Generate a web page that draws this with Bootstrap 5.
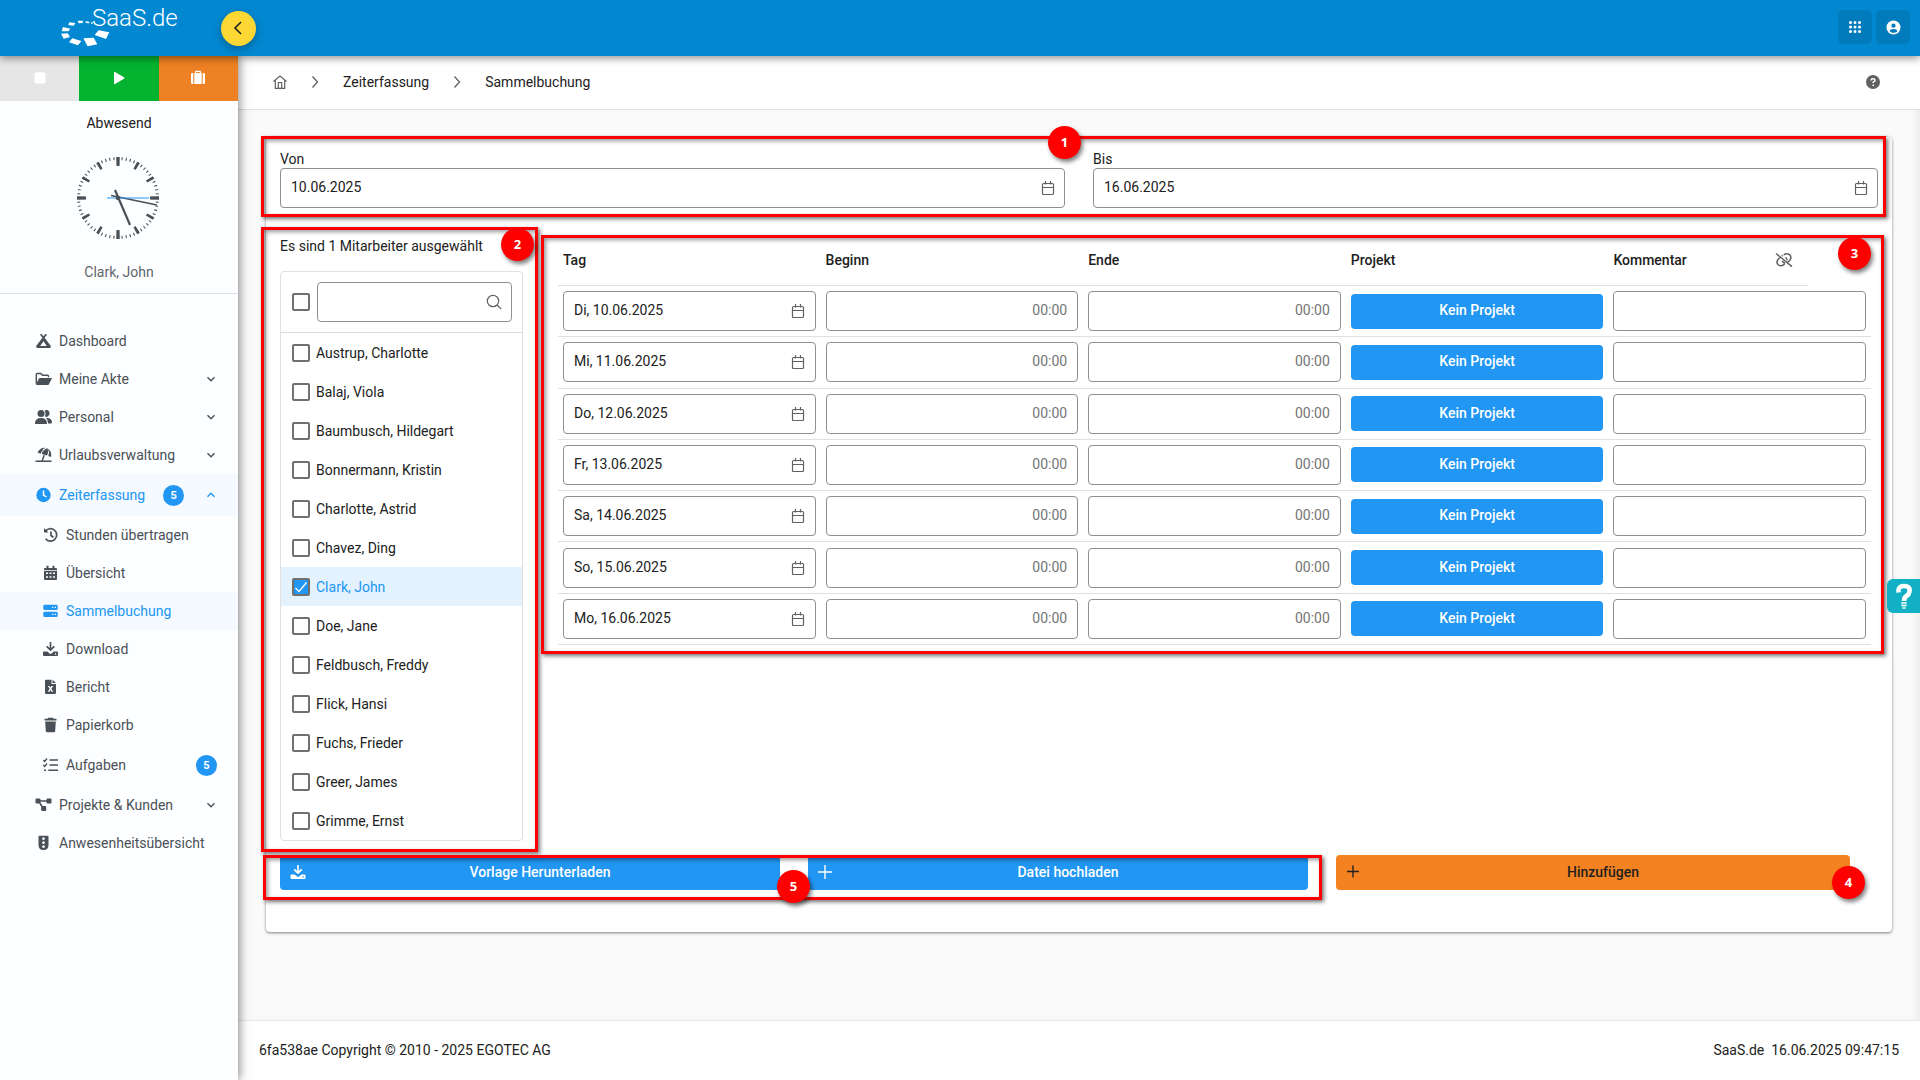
<!DOCTYPE html>
<html lang="de">
<head>
<meta charset="utf-8">
<meta name="viewport" content="width=device-width, initial-scale=1">
<title>Sammelbuchung – SaaS.de</title>
<link href="https://cdn.jsdelivr.net/npm/bootstrap@5.3.0/dist/css/bootstrap.min.css" rel="stylesheet">
<style>
:root { --brand: #0288d1; --accent: #2196f3; --ink: #212121; --side: #495057; --line: #e0e0e0; --note: #f00; }
body { font-family: Roboto, "Noto Sans", sans-serif; font-size: 14px; line-height: 18px; color: var(--ink); background: #fafafa; }
svg { display: block; flex: none; }
.ico { width: 16px; height: 16px; fill: currentColor; }
.line-ico { fill: none; stroke: currentColor; }
a { color: inherit; text-decoration: none; }

/* top bar */
.topbar { height: 56px; background: var(--brand); box-shadow: 0 2px 8px rgba(0,0,0,.45); z-index: 20; position: relative; color: #fff; padding-right: 10px; }
.brandbox { width: 221px; padding: 8px 0 0 61px; height: 56px; }
.brandbox svg { margin-top: 12px; }
.brandname { font-size: 24px; line-height: 21px; font-weight: 300; margin-left: -19px; }
.toggle { width: 35px; height: 35px; margin-top: 11px; padding: 0 2px 2px 0; border: 0; border-radius: 50%; background: #fdd835; color: #212121; box-shadow: 0 3px 8px rgba(0,0,0,.3); }
.topbtns { margin-top: 10px; gap: 4px; }
.topbtn { width: 34px; height: 34px; border: 0; border-radius: 5px; background: #027bbd; color: #fff; }

/* side bar */
.sidebar { width: 238px; background: #fdfeff; color: var(--side); box-shadow: 1px 0 10px rgba(0,0,0,.5); z-index: 10; position: relative; }
.state button { flex: 1; height: 45px; border: 0; color: #fff; padding-bottom: 2px; }
.st-stop { background: #e6e6e6; }
.st-play { background: #03b22f; }
.st-trip { background: #ed8123; }
.person { padding: 11px 0 10px; line-height: 22px; border-bottom: 1px solid #dee2e6; color: #5f666c; }
.person svg { margin: 23px auto 22px; }
.presence { color: var(--ink); }
.menu { padding-top: 28px; }
.menu a { height: 38px; padding: 0 21px 0 35px; display: flex; align-items: center; gap: 7px; }
.menu .sub { padding-left: 42px; }
.menu .tall { height: 42px; }
.menu .on { background: #f4faff; color: var(--accent); }
.menu .ico { width: 17px; }
.menu .chev { width: 12px; height: 12px; margin-left: auto; }
.count { width: 21px; height: 21px; line-height: 21px; margin-left: 11px; border-radius: 50%; background: var(--accent); color: #fff; font-size: 11px; font-weight: 700; text-align: center; }

/* page */
.crumbs { height: 54px; background: #fff; border-bottom: 1px solid var(--line); padding: 0 40px 2px 34px; gap: 24px; }
.crumbs svg { color: #616161; }
.crumbs .arrow { margin-left: -1px; }
.pagebody { padding: 27px 28px; box-shadow: inset -6px 0 8px -4px rgba(0,0,0,.08); }
.sheet { background: #fff; border-radius: 4px; box-shadow: 0 1px 3px rgba(0,0,0,.5); padding: 13px 0 42px; }
.sheet .fld { height: 40px; border: 1px solid #8f8f8f; border-radius: 4px; font-size: 14px; padding: 0 10px 2px; color: var(--ink); background: #fff; width: 100%; }
.sheet .fld::placeholder { color: #757575; }
.boxed { position: relative; }
.boxed .ico { position: absolute; right: 9px; top: 12px; color: #616161; }
.booking .boxed .ico, .find .boxed .ico { right: 10px; }
.range { padding: 0 14px; gap: 28px; }
.split { margin-top: 29px; }
.staffcol { width: 16.6667%; padding: 0 14px; }
.staffcol p { margin: 0 0 16px; white-space: nowrap; }
.staff { border: 1px solid #e0e0e0; border-radius: 4px; }
.staff .find { padding: 10px 10px 10px 11px; gap: 7px; border-bottom: 1px solid #dcdcdc; }
.staff label { display: flex; align-items: center; gap: 6px; height: 39px; padding-left: 11px; }
.staff .sel { background: #e3f2fd; color: var(--accent); }
.tick { appearance: none; flex: none; margin: 0; width: 18px; height: 18px; border: 2px solid #707070; border-radius: 2px; background: #fff; }
.tick:checked { background: var(--accent) url("data:image/svg+xml,%3Csvg xmlns='http://www.w3.org/2000/svg' viewBox='0 0 14 14'%3E%3Cpath fill='none' stroke='%23fff' stroke-width='1.3' d='M1.5 8l3.5 3.5L12.5 2.5'/%3E%3C/svg%3E"); }
.bookcol { flex: 1; min-width: 0; padding: 0 21px; margin-top: -2px; }
.booking { width: 100%; height: 410px; table-layout: fixed; border-collapse: separate; border-spacing: 0; }
.booking th { height: 51px; font-weight: 500; padding: 0 5px; border-bottom: 1px solid var(--line); }
.booking th:last-child { border: 0; }
.booking .c-note { padding-right: 15px; }
.booking td { padding: 5px; border-bottom: 1px solid var(--line); }
.c-fifth { width: 20%; }
.c-rest { width: 63px; }
.act { border: 0; border-radius: 4px; height: 35px; background: var(--accent); color: #fff; font-weight: 500; padding: 0 10px 2px; width: 100%; }
.act span { flex: 1; margin-left: 4px; }
.act.warn { background: #f58220; color: var(--ink); }
.acts { display: grid; grid-template-columns: 500fr 500fr 514fr; gap: 28px; padding: 0 42px 0 14px; margin-top: 14px; }
.files { grid-column: 1 / span 2; display: grid; grid-template-columns: 1fr 1fr; column-gap: 28px; }
.foot { height: 60px; background: #fff; border-top: 1px solid #e8e8e8; padding: 0 21px 2px; }
.foot span { white-space: pre; }

/* red annotations lying over the page */
.frame { position: absolute; border: 3px solid var(--note); box-shadow: 2px 2px 4px rgba(0,0,0,.55), inset 2px 2px 4px rgba(0,0,0,.4); pointer-events: none; z-index: 5; }
.pin { position: absolute; width: 33px; height: 33px; border-radius: 50%; background: var(--note); color: #fff; font: 700 13px/33px "Open Sans", sans-serif; text-align: center; box-shadow: 2px 3px 4px rgba(0,0,0,.5); z-index: 6; }
.f-range { inset: -14px 6px -9px -5px; } .p-range { left: 50%; top: -24px; margin-left: -31px; }
.f-staff { inset: -10px -1px -11px -5px; } .p-staff { right: 3px; top: -9px; }
.f-book { inset: 0 -13px -9px -17px; } .p-book { right: 0; top: 2px; }
.f-acts { inset: 0 -14px -10px -17px; } .p-acts { left: 50%; top: 15px; margin-left: -17px; } .p-add { right: -15px; top: 11px; }
.helper { position: fixed; right: 0; top: 579px; width: 33px; height: 34px; border: 0; border-radius: 6px 0 0 6px; background: #12b0c4; color: #fff; z-index: 9; padding: 0 0 0 6px; }
</style>
<script src="https://cdn.jsdelivr.net/npm/bootstrap@5.3.0/dist/js/bootstrap.bundle.min.js"></script>
</head>
<body class="d-flex flex-column min-vh-100">

<svg class="d-none" aria-hidden="true">
  <symbol id="cal" viewBox="0 0 16 16"><path d="M3.500 3.500h9q1 0 1 1v9q0 1-1 1h-9q-1 0-1-1v-9q0-1 1-1zM2.500 7.500h11M5.500 1v3.500M10.500 1v3.500" fill="none" stroke="currentColor" stroke-width="1.200"/></symbol>
  <symbol id="down" viewBox="0 0 12 12"><path d="M2.500 4.200L6 7.700l3.500-3.500" fill="none" stroke="currentColor" stroke-width="1.400"/></symbol>
  <symbol id="gt" viewBox="0 0 8 16"><path d="M1.500 2.500L6.500 8l-5 5.500" fill="none" stroke="currentColor" stroke-width="1.300"/></symbol>
  <symbol id="load" viewBox="0 0 16 16"><path d="M7.200 1h1.600v6l2.400-2.300 1.200 1.200L8 10.300 3.600 5.900l1.200-1.200L7.200 7z"/><path d="M1.500 10.500h3.200L8 13.300l3.300-2.800h3.200a1 1 0 0 1 1 1V14a1 1 0 0 1-1 1h-13a1 1 0 0 1-1-1v-2.500a1 1 0 0 1 1-1zM13 12.200a.7.7 0 1 0 .01 0z" fill-rule="evenodd"/></symbol>
</svg>

<header class="topbar d-flex align-items-start">
  <a href="#" class="brandbox d-flex align-items-start" aria-label="SaaS.de">
    <svg width="50" height="27" viewBox="0 0 150 81" fill="#fff"><path d="M101 45l12-14 32 6-10 20zM67 55l31-2 11 20-29 6zM34 55l27 8-10 13-27-9zM0 41l20-1 7 11-19 5zM6 21l22 5-6 8H2zM25 7l18 2-5 8-16-2zM50 2h16l-1 7-12 1zM73 4l11 1 2 5-11-1zM90 7h5v4h-5zM99 10h4v3h-4z"/></svg>
    <div class="brandname">SaaS.de</div>
  </a>
  <button class="toggle d-flex align-items-center justify-content-center" aria-label="Menü einklappen"><svg width="12" height="16" viewBox="0 0 12 16" class="line-ico" stroke-width="1.600"><path d="M9 2L3 8l6 6"/></svg></button>
  <div class="topbtns d-flex ms-auto">
    <button class="topbtn d-flex align-items-center justify-content-center p-0" aria-label="Apps"><svg width="14" height="14" viewBox="0 0 14 14"><path d="M2.500 2.500h.01M7 2.500h.01M11.500 2.500h.01M2.500 7h.01M7 7h.01M11.500 7h.01M2.500 11.500h.01M7 11.500h.01M11.500 11.500h.01" stroke="#fff" stroke-width="3" stroke-linecap="round"/></svg></button>
    <button class="topbtn d-flex align-items-center justify-content-center p-0" aria-label="Profil"><svg width="15" height="15" viewBox="0 0 15 15"><circle cx="7.500" cy="7.500" r="7" fill="#fff"/><circle cx="7.500" cy="5.700" r="2.100" fill="#027bbd"/><path d="M3.700 11.300c0-3.200 7.600-3.200 7.600 0-2 2-5.600 2-7.600 0z" fill="#027bbd"/></svg></button>
  </div>
</header>

<div class="d-flex flex-grow-1">
  <aside class="sidebar flex-shrink-0">
    <div class="state d-flex">
      <button class="st-stop d-flex align-items-center justify-content-center" aria-label="Stopp"><svg width="12" height="12"><rect x=".5" y=".5" width="11" height="11" rx="1.500" fill="#fff"/></svg></button>
      <button class="st-play d-flex align-items-center justify-content-center" aria-label="Start"><svg width="12" height="14" viewBox="0 0 12 14"><path d="M1 1.500v11q0 1 1 .5l9-5.300q1-.7 0-1.400L2 1q-1-.5-1 .5z" fill="#fff"/></svg></button>
      <button class="st-trip d-flex align-items-center justify-content-center" aria-label="Reise"><svg width="16" height="16" viewBox="0 0 16 16" fill="#fff"><path d="M5 3V1.500q0-.8.800-.8h4.400q.8 0 .8.800V3h.7v11H4.300V3zM6.200 3h3.600V1.900H6.200z" fill-rule="evenodd"/><path d="M3.300 3v11h-1Q1 14 1 12.700V4.300Q1 3 2.300 3zM12.700 3v11h1q1.300 0 1.300-1.300V4.300Q15 3 13.700 3z"/></svg></button>
    </div>
    <div class="person text-center">
      <div class="presence">Abwesend</div>
      <svg width="86" height="82" viewBox="-42 -41 86 82" role="img" aria-label="Uhr">
        <circle r="39.500" fill="none" stroke="#495057" stroke-width="3" pathLength="600" stroke-dasharray="2.600 7.400" stroke-dashoffset="1.300"/>
        <circle r="37" fill="none" stroke="#495057" stroke-width="8" pathLength="120" stroke-dasharray="1.400 8.600" stroke-dashoffset=".7"/>
        <path d="M-41 0h9M32 0h9M0-41v9M0 32v9" stroke="#495057" stroke-width="3"/>
        <path d="M-7-2.500L39 7" stroke="#495057" stroke-width="1.600"/>
        <path d="M-3-8L12 27" stroke="#495057" stroke-width="2.200"/>
        <path d="M-11 0h42" stroke="#2196f3" stroke-width="1.200"/>
        <circle r="2.200" fill="#495057"/>
      </svg>
      <div>Clark, John</div>
    </div>
    <nav class="menu">
      <a href="#"><svg class="ico" viewBox="0 0 17 16"><path d="M6.200.8L8.500 3.300 10.800.8l1.200 1L9.600 4.700l6.200 8.300q.5 1.800-1.300 2h-12Q.7 14.800 1.200 13l6.200-8.300L5 1.800zM8.500 8.300L5.200 13h6.600z" fill-rule="evenodd"/></svg>Dashboard</a>
      <a href="#"><svg class="ico" viewBox="0 0 17 16"><path d="M1.300 12.800V3.500q0-1 1-1h3.500l1.700 1.800h5q1 0 1 1v1" fill="none" stroke="currentColor" stroke-width="1.400"/><path d="M4.500 7h11.700q.8.200.5 1l-3 5.500q-.4.500-1 .5H1.500q-.7-.2-.4-.9L4 7.500z"/></svg>Meine Akte<svg class="chev"><use href="#down"/></svg></a>
      <a href="#"><svg class="ico" viewBox="0 0 17 16"><circle cx="6" cy="4.500" r="3.500"/><path d="M0 14.500q0-5.500 6-5.500t6 5.500q-.2.500-1 .5H1q-1 0-1-.5zM9.500 1.400a3.400 3.400 0 1 1 .3 6q1.500-3-.3-6zM11 9q6-.5 6 4.500 0 1-1 1h-3Q13.200 11 11 9z"/></svg>Personal<svg class="chev"><use href="#down"/></svg></a>
      <a href="#"><svg class="ico" viewBox="0 0 17 16"><path d="M2.500 5.500Q5.500-.3 11 .9L8.300 1.800 5.600 6.700zM9 3l3-1.700Q17.300 4 16 10l-2.800-1q1.800-4.300-.6-6.700 1.200 3-.7 6.300L6.800 6.900q.5-2.700 2.200-3.900zM8.400 8l1.500.5L8 13.500h8.500V15H.5v-1.500h6z"/></svg>Urlaubsverwaltung<svg class="chev"><use href="#down"/></svg></a>
      <a href="#" class="on tall"><svg class="ico" viewBox="0 0 16 16"><circle cx="8" cy="8" r="7.200"/><path d="M8 3.500V8l3 2" fill="none" stroke="#fff" stroke-width="1.500"/></svg>Zeiterfassung<span class="count">5</span><svg class="chev" viewBox="0 0 12 12"><path d="M2.500 7.700L6 4.200l3.500 3.500" fill="none" stroke="currentColor" stroke-width="1.400"/></svg></a>
      <a href="#" class="sub"><svg class="ico line-ico" viewBox="0 0 16 16" stroke-width="1.700"><path d="M2.800 4.500a6.200 6.200 0 1 1 .3 7.200M8.500 4.500v4l2.500 1.800"/><path d="M1.500 1v4.500H6z" fill="currentColor" stroke="none"/></svg>Stunden übertragen</a>
      <a href="#" class="sub"><svg class="ico" viewBox="0 0 16 16"><path d="M4 .8h2V3h4V.8h2V3h1.500q1 0 1 1v1.200h-13V4q0-1 1-1H4zM1.500 6h13v8q0 1-1 1h-11q-1 0-1-1zm2 1.500V9h2V7.500zm3.500 0V9h2V7.500zm3.500 0V9h2V7.500zm-7 3.800v1.500h2v-1.500zm3.500 0v1.500h2v-1.500zm3.500 0v1.500h2v-1.500z" fill-rule="evenodd"/></svg>Übersicht</a>
      <a href="#" class="sub on"><svg class="ico" viewBox="0 0 16 16"><path d="M2.200 1.700h11.600q1.400 0 1.400 1.400v2.600q0 1.400-1.400 1.400H2.200Q.8 7.100.8 5.700V3.100q0-1.400 1.400-1.400zM9.500 3.700v1.400h1.300V3.700zm2.700 0v1.400h1.300V3.700zM2.200 8.700h11.600q1.400 0 1.400 1.400v2.600q0 1.400-1.400 1.400H2.200Q.8 14.100.8 12.700v-2.600q0-1.400 1.400-1.400zM9.500 10.700v1.400h1.300v-1.400zm2.700 0v1.400h1.300v-1.400z" fill-rule="evenodd"/></svg>Sammelbuchung</a>
      <a href="#" class="sub"><svg class="ico"><use href="#load"/></svg>Download</a>
      <a href="#" class="sub"><svg class="ico" viewBox="0 0 16 16"><path d="M3.500.8H9V5h4.500v8.700q0 1.300-1.300 1.300H3.800q-1.300 0-1.300-1.300V2q0-1.200 1-1.200zM5.200 7l2 2.800-2 2.900h1.700L8 11l1.100 1.700h1.700l-2-2.900 2-2.800H9.100L8 8.600 6.900 7z" fill-rule="evenodd"/><path d="M10 .8L13.500 4H10z"/></svg>Bericht</a>
      <a href="#" class="sub"><svg class="ico" viewBox="0 0 16 16"><path d="M5.500.8h5l.6 1H14v1.700H2V1.800h2.900zM2.700 4.500h10.600l-.6 9.500q-.1 1.200-1.300 1.200H4.600q-1.200 0-1.300-1.200z"/></svg>Papierkorb</a>
      <a href="#" class="sub tall"><svg class="ico line-ico" viewBox="0 0 16 16" stroke-width="1.400"><path d="M.8 3l1.400 1.400L4.500 1.500M.8 8l1.400 1.400 2.300-2.900M7 3h8.500M7 8h8.500M5.800 13.300h9.700M1.500 13.300h2"/></svg>Aufgaben<span class="count ms-auto">5</span></a>
      <a href="#"><svg class="ico" viewBox="0 0 17 16"><path d="M1.500 1.500h3q1 0 1 1v.8h6v-.8q0-1 1-1h3q1 0 1 1v3q0 1-1 1h-3q-1 0-1-1v-.7h-6v.7l2.200 3.600h2.500q1 0 1 1v3q0 1-1 1h-3q-1 0-1-1v-3.300L4.200 6.500H1.500q-1 0-1-1v-3q0-1 1-1z"/></svg>Projekte &amp; Kunden<svg class="chev"><use href="#down"/></svg></a>
      <a href="#"><svg class="ico" viewBox="0 0 16 16"><path d="M4 .8h8q1 0 1 1V10q0 5-5 5t-5-5V1.800q0-1 1-1zm4 1.400a1.400 1.400 0 1 0 .01 0zm0 4a1.400 1.400 0 1 0 .01 0zm0 4a1.400 1.400 0 1 0 .01 0z" fill-rule="evenodd"/></svg>Anwesenheitsübersicht</a>
    </nav>
  </aside>

  <div class="d-flex flex-column flex-grow-1">
    <nav class="crumbs d-flex align-items-center" aria-label="Brotkrumen">
      <a href="#" aria-label="Start"><svg width="16" height="16" viewBox="0 0 16 16" class="line-ico" stroke-width="1.200"><path d="M1.500 7.500L8 2l6.500 5.500M3.300 6v8.400h9.400V6M6.300 14.400V8.500h3.400v5.900"/></svg></a>
      <svg class="arrow" width="8" height="16"><use href="#gt"/></svg>
      <a href="#">Zeiterfassung</a>
      <svg width="8" height="16"><use href="#gt"/></svg>
      <a href="#">Sammelbuchung</a>
      <a href="#" class="ms-auto" aria-label="Hilfe"><svg width="14" height="14" viewBox="0 0 14 14"><circle cx="7" cy="7" r="7" fill="#616161"/><path d="M5 5.500Q5.200 3.700 7 3.700t2 1.500Q9 6.400 7.200 7.100v.9M7.200 9.500v1.400" fill="none" stroke="#fff" stroke-width="1.500"/></svg></a>
    </nav>

    <main class="pagebody flex-grow-1">
      <div class="sheet">
        <section class="range d-flex position-relative">
          <div class="w-100"><label for="von" class="d-block">Von</label><div class="boxed"><input id="von" class="fld" value="10.06.2025"><svg class="ico"><use href="#cal"/></svg></div></div>
          <div class="w-100"><label for="bis" class="d-block">Bis</label><div class="boxed"><input id="bis" class="fld" value="16.06.2025"><svg class="ico"><use href="#cal"/></svg></div></div>
          <div class="frame f-range"></div><div class="pin p-range">1</div>
        </section>

        <div class="split d-flex">
          <section class="staffcol position-relative">
            <p>Es sind 1 Mitarbeiter ausgewählt</p>
            <div class="staff">
              <div class="find d-flex align-items-center"><input type="checkbox" class="tick" aria-label="Alle auswählen"><div class="boxed flex-grow-1"><input type="search" class="fld" aria-label="Suche"><svg class="ico line-ico" viewBox="0 0 16 16" stroke-width="1.200"><circle cx="7" cy="7" r="5.700"/><path d="M11 11l4.200 4.200"/></svg></div></div>
              <label><input type="checkbox" class="tick">Austrup, Charlotte</label>
              <label><input type="checkbox" class="tick">Balaj, Viola</label>
              <label><input type="checkbox" class="tick">Baumbusch, Hildegart</label>
              <label><input type="checkbox" class="tick">Bonnermann, Kristin</label>
              <label><input type="checkbox" class="tick">Charlotte, Astrid</label>
              <label><input type="checkbox" class="tick">Chavez, Ding</label>
              <label class="sel"><input type="checkbox" class="tick" checked>Clark, John</label>
              <label><input type="checkbox" class="tick">Doe, Jane</label>
              <label><input type="checkbox" class="tick">Feldbusch, Freddy</label>
              <label><input type="checkbox" class="tick">Flick, Hansi</label>
              <label><input type="checkbox" class="tick">Fuchs, Frieder</label>
              <label><input type="checkbox" class="tick">Greer, James</label>
              <label><input type="checkbox" class="tick">Grimme, Ernst</label>
            </div>
            <div class="frame f-staff"></div><div class="pin p-staff">2</div>
          </section>

          <section class="bookcol">
            <div class="position-relative">
            <table class="booking">
              <colgroup><col class="c-fifth"><col class="c-fifth"><col class="c-fifth"><col class="c-fifth"><col><col class="c-rest"></colgroup>
              <thead><tr><th>Tag</th><th>Beginn</th><th>Ende</th><th>Projekt</th><th class="c-note"><div class="d-flex align-items-center justify-content-between">Kommentar<svg width="18" height="16" viewBox="0 0 18 16" class="line-ico" stroke="#616161" color="#616161" stroke-width="1.500"><path d="M1 1.500l16 13.200M6.800 4.200l.9-.9M8.800 2.900q2.500-2.200 5.300-.5Q17.200 5 15 8l-2.500 2.600M7.200 9q1.200 2 3 1.900M5.300 5L3.200 7.200Q.6 10.500 3.500 13q2.700 1.800 5.300-.3l.8-.8M10.500 5.300q1.600.8 1.500 3"/></svg></div></th><th></th></tr></thead>
              <tbody>
                <tr><td><div class="boxed"><input class="fld" aria-label="Tag" value="Di, 10.06.2025"><svg class="ico"><use href="#cal"/></svg></div></td><td><input class="fld text-end" aria-label="Beginn" placeholder="00:00"></td><td><input class="fld text-end" aria-label="Ende" placeholder="00:00"></td><td><button class="act">Kein Projekt</button></td><td colspan="2"><input class="fld" aria-label="Kommentar"></td></tr>
                <tr><td><div class="boxed"><input class="fld" aria-label="Tag" value="Mi, 11.06.2025"><svg class="ico"><use href="#cal"/></svg></div></td><td><input class="fld text-end" aria-label="Beginn" placeholder="00:00"></td><td><input class="fld text-end" aria-label="Ende" placeholder="00:00"></td><td><button class="act">Kein Projekt</button></td><td colspan="2"><input class="fld" aria-label="Kommentar"></td></tr>
                <tr><td><div class="boxed"><input class="fld" aria-label="Tag" value="Do, 12.06.2025"><svg class="ico"><use href="#cal"/></svg></div></td><td><input class="fld text-end" aria-label="Beginn" placeholder="00:00"></td><td><input class="fld text-end" aria-label="Ende" placeholder="00:00"></td><td><button class="act">Kein Projekt</button></td><td colspan="2"><input class="fld" aria-label="Kommentar"></td></tr>
                <tr><td><div class="boxed"><input class="fld" aria-label="Tag" value="Fr, 13.06.2025"><svg class="ico"><use href="#cal"/></svg></div></td><td><input class="fld text-end" aria-label="Beginn" placeholder="00:00"></td><td><input class="fld text-end" aria-label="Ende" placeholder="00:00"></td><td><button class="act">Kein Projekt</button></td><td colspan="2"><input class="fld" aria-label="Kommentar"></td></tr>
                <tr><td><div class="boxed"><input class="fld" aria-label="Tag" value="Sa, 14.06.2025"><svg class="ico"><use href="#cal"/></svg></div></td><td><input class="fld text-end" aria-label="Beginn" placeholder="00:00"></td><td><input class="fld text-end" aria-label="Ende" placeholder="00:00"></td><td><button class="act">Kein Projekt</button></td><td colspan="2"><input class="fld" aria-label="Kommentar"></td></tr>
                <tr><td><div class="boxed"><input class="fld" aria-label="Tag" value="So, 15.06.2025"><svg class="ico"><use href="#cal"/></svg></div></td><td><input class="fld text-end" aria-label="Beginn" placeholder="00:00"></td><td><input class="fld text-end" aria-label="Ende" placeholder="00:00"></td><td><button class="act">Kein Projekt</button></td><td colspan="2"><input class="fld" aria-label="Kommentar"></td></tr>
                <tr><td><div class="boxed"><input class="fld" aria-label="Tag" value="Mo, 16.06.2025"><svg class="ico"><use href="#cal"/></svg></div></td><td><input class="fld text-end" aria-label="Beginn" placeholder="00:00"></td><td><input class="fld text-end" aria-label="Ende" placeholder="00:00"></td><td><button class="act">Kein Projekt</button></td><td colspan="2"><input class="fld" aria-label="Kommentar"></td></tr>
              </tbody>
            </table>
            <div class="frame f-book"></div><div class="pin p-book">3</div>
            </div>
          </section>
        </div>

        <section class="acts">
          <div class="files position-relative">
            <button class="act d-flex align-items-center"><svg class="ico"><use href="#load"/></svg><span>Vorlage Herunterladen</span></button>
            <button class="act d-flex align-items-center"><svg class="ico line-ico" viewBox="0 0 16 16" stroke-width="1.400"><path d="M7 1v14M0 8h14"/></svg><span>Datei hochladen</span></button>
            <div class="frame f-acts"></div><div class="pin p-acts">5</div>
          </div>
          <div class="position-relative">
            <button class="act warn d-flex align-items-center"><svg class="ico line-ico" viewBox="0 0 16 16" stroke-width="1.400"><path d="M7 1.500v12M1 7.500h12"/></svg><span>Hinzufügen</span></button>
            <div class="pin p-add">4</div>
          </div>
        </section>
      </div>
    </main>

    <footer class="foot d-flex align-items-center justify-content-between">
      <span>6fa538ae Copyright © 2010 - 2025 EGOTEC AG</span>
      <span>SaaS.de  16.06.2025 09:47:15</span>
    </footer>
  </div>
</div>

<button class="helper" aria-label="Hilfe-Tour"><svg width="22" height="28" viewBox="0 0 22 28"><path d="M5.500 10.500Q4.500 4 11 4t5.500 5.500Q16 12.500 13.500 14q-2.500 1.600-2.500 5" fill="none" stroke="#fff" stroke-width="4.600"/><path d="M8.300 21h5.400M8.300 23.500h5.400M9.500 26h3" stroke="#fff" stroke-width="1.500"/></svg></button>
</body>
</html>
